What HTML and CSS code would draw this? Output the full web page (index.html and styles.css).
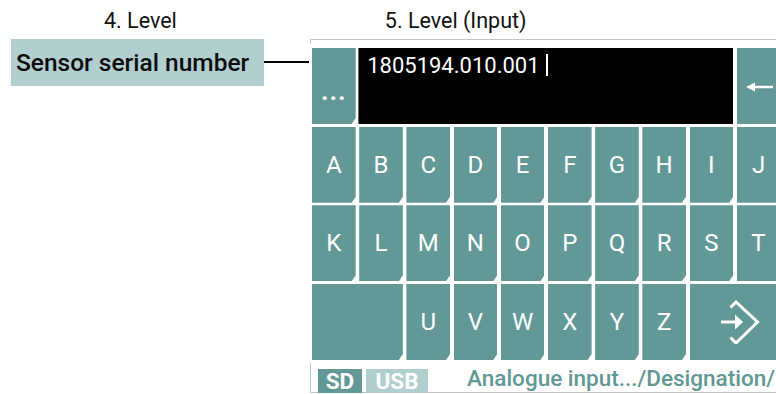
FILE: index.html
```html
<!DOCTYPE html>
<html>
<head>
<meta charset="utf-8">
<link rel="stylesheet" href="styles.css">
</head>
<body>
<div class="page">
  <div class="captions">
    <div class="cap cap4">4. Level</div>
    <div class="cap cap5">5. Level (Input)</div>
  </div>
  <div class="main">
    <div class="label-wrap">
      <div class="label">Sensor serial number</div>
      <div class="connector"></div>
    </div>
    <div class="screen">
      <div class="keyboard">
        <div class="key dots">...</div>
        <div class="display"><span class="value">1805194.010.001</span><span class="cursor"></span></div>
        <div class="key back">
          <svg width="28" height="12" viewBox="0 0 28 12"><path d="M0 6 L9 1.5 L9 4.8 L27 4.8 L27 7.2 L9 7.2 L9 10.5 Z" fill="#fff"/></svg>
        </div>
        <div class="key">A</div><div class="key">B</div><div class="key">C</div><div class="key">D</div><div class="key">E</div>
        <div class="key">F</div><div class="key">G</div><div class="key">H</div><div class="key">I</div><div class="key">J</div>
        <div class="key">K</div><div class="key">L</div><div class="key">M</div><div class="key">N</div><div class="key">O</div>
        <div class="key">P</div><div class="key">Q</div><div class="key">R</div><div class="key">S</div><div class="key">T</div>
        <div class="key space"></div>
        <div class="key">U</div><div class="key">V</div><div class="key">W</div><div class="key">X</div><div class="key">Y</div><div class="key">Z</div>
        <div class="key enter">
          <svg width="40" height="44" viewBox="0 0 40 44"><path d="M10.5 7.5 L16 2 L37.5 22 L16 43 L10.5 37.5" fill="none" stroke="#fff" stroke-width="3"/><path d="M1 22 L17 22" stroke="#fff" stroke-width="3.2"/><path d="M15 14.5 L23 22 L15 29.5 Z" fill="#fff"/></svg>
        </div>
      </div>
      <div class="status">
        <span class="badge sd">SD</span>
        <span class="badge usb">USB</span>
        <span class="path">Analogue input.../Designation/</span>
      </div>
    </div>
  </div>
</div>
</body>
</html>
```

FILE: styles.css
```css
html, body {
  margin: 0;
  padding: 0;
  background: #ffffff;
  overflow: hidden;
}
body {
  width: 776px;
  height: 394px;
  font-family: Roboto, "Liberation Sans", sans-serif;
}
.page {
  display: flex;
  flex-direction: column;
}
.captions {
  height: 39px;
  display: flex;
  align-items: flex-start;
}
.cap {
  font-size: 21.5px;
  color: #111;
  padding-top: 9px;
  line-height: 24px;
}
.cap4 { margin-left: 104px; }
.cap5 { margin-left: 208px; }
.main {
  display: flex;
  align-items: flex-start;
}
.label-wrap {
  display: flex;
  align-items: center;
  margin-left: 11px;
}
.label {
  width: 253px;
  height: 47px;
  background: #b2cfcf;
  color: #0c0c0c;
  font-size: 24.5px;
  font-weight: 500;
  display: flex;
  align-items: center;
  padding-left: 5px;
  box-sizing: border-box;
  white-space: nowrap;
}
.connector {
  width: 45px;
  height: 2px;
  background: #000;
  margin-top: -2px;
}
.screen {
  margin-left: 1px;
  width: 466px;
  overflow: hidden;
  border-top: 1px solid #c4c4c4;
  background: linear-gradient(#c4c4c4, #c4c4c4) left top / 1px 4px no-repeat;
  padding-top: 8px;
}
.keyboard {
  display: grid;
  grid-template-columns: repeat(10, 43.7px);
  grid-template-rows: repeat(4, 76px);
  column-gap: 3.5px;
  row-gap: 2.67px;
  margin-left: 2px;
  width: 480px;
}
.key {
  background: #629997;
  color: #ffffff;
  font-size: 24px;
  display: flex;
  align-items: center;
  justify-content: center;
  clip-path: polygon(0 0, 100% 0, 100% calc(100% - 6px), calc(100% - 4px) 100%, 0 100%);
}
.dots { grid-column: 1; padding-top: 10px; font-size: 26px; font-weight: 700; letter-spacing: 1px; }
.display {
  grid-column: 2 / 10;
  background: #000;
  border-left: 1px solid #666;
  margin-left: -1px;
  color: #fff;
  font-size: 22px;
  padding: 5px 0 0 8px;
  display: flex;
  align-items: flex-start;
}
.value { line-height: 26px; }
.cursor {
  width: 2px;
  height: 22px;
  background: #fff;
  margin-left: 6px;
  margin-top: 1px;
}
.back { grid-column: 10; justify-content: flex-start; padding-left: 9px; padding-top: 2px; }
.space { grid-column: 1 / 3; }
.enter { grid-column: 9 / 11; justify-content: flex-start; padding-left: 30px; }
.status {
  margin-top: 3px;
  height: 30px;
  border-left: 1px solid #c4c4c4;
  border-bottom: 1px solid #c4c4c4;
  display: flex;
  align-items: flex-end;
  box-sizing: border-box;
}
.badge {
  height: 24px;
  margin-bottom: -1px;
  color: #fff;
  font-weight: 700;
  font-size: 22.5px;
  line-height: 24px;
  display: flex;
  align-items: center;
  justify-content: center;
  box-sizing: border-box;
}
.sd {
  margin-left: 7px;
  width: 44px;
  background: #629997;
}
.usb {
  margin-left: 4px;
  width: 62px;
  background: #b2cfcf;
}
.path {
  margin-left: auto;
  margin-right: 1px;
  color: #5f9896;
  font-size: 22.5px;
  font-weight: 500;
  line-height: 24px;
  padding-bottom: 2px;
  white-space: nowrap;
}
```
